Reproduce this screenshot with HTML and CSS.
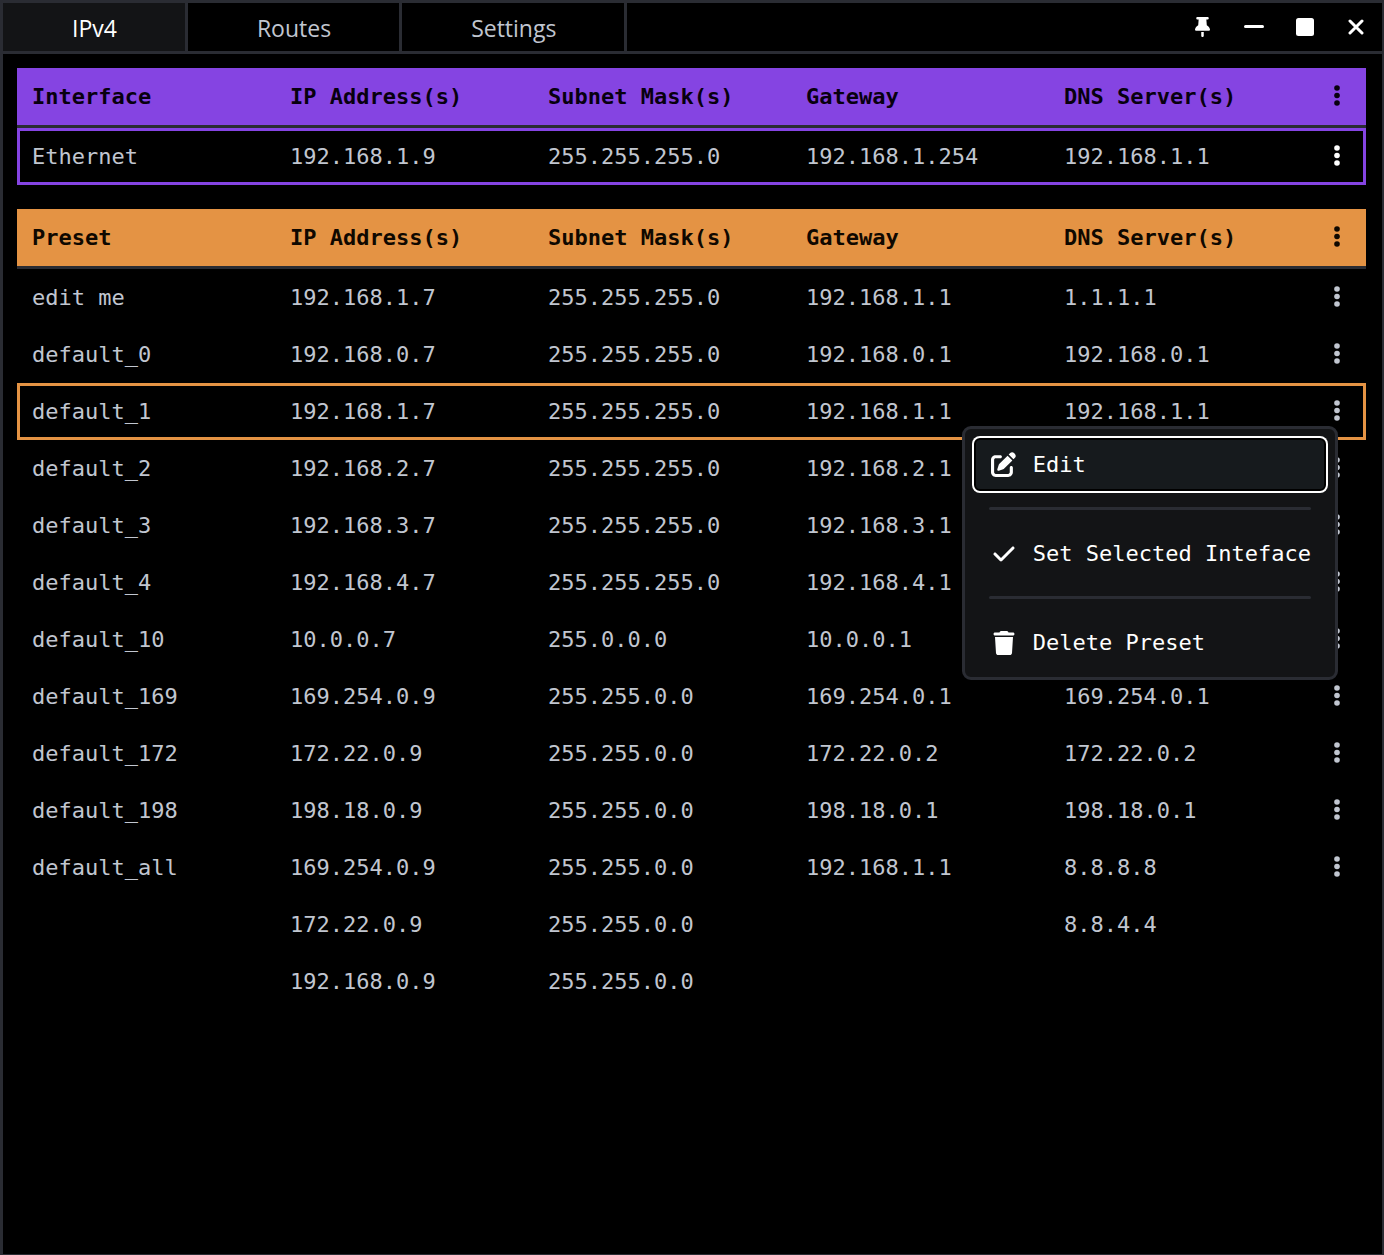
FILE: index.html
```html
<!DOCTYPE html>
<html lang="en">
<head>
<meta charset="utf-8">
<title>IPv4</title>
<link rel="stylesheet" href="styles.css">
</head>
<body>
<svg class="sprite" aria-hidden="true">
  <symbol id="dots" viewBox="0 0 6 21"><circle cx="3" cy="3" r="2.8"/><circle cx="3" cy="10.5" r="2.8"/><circle cx="3" cy="18" r="2.8"/></symbol>
  <symbol id="pin" viewBox="0 0 384 512"><path d="M32 32C32 14.3 46.3 0 64 0H320c17.7 0 32 14.3 32 32s-14.3 32-32 32H290.5l11.4 148.2c36.7 19.9 65.7 53.2 79.5 94.7l1 3c3.3 9.8 1.6 20.5-4.4 28.8s-15.7 13.3-26 13.3H32c-10.3 0-19.9-4.9-26-13.3s-7.7-19.1-4.4-28.8l1-3c13.8-41.5 42.8-74.8 79.5-94.7L93.5 64H64C46.3 64 32 49.7 32 32zM160 384h64v96c0 17.7-14.3 32-32 32s-32-14.3-32-32V384z"/></symbol>
  <symbol id="edit" viewBox="0 0 512 512"><path d="M471.6 21.7c-21.9-21.9-57.3-21.9-79.2 0L362.3 51.7l97.9 97.9 30.1-30.1c21.9-21.9 21.9-57.3 0-79.2L471.6 21.7zm-299.2 220c-6.1 6.1-10.8 13.6-13.5 21.9l-29.6 88.8c-2.9 8.6-.6 18.1 5.8 24.6s15.9 8.7 24.6 5.8l88.8-29.6c8.2-2.7 15.7-7.4 21.9-13.5L437.7 172.3 339.7 74.3 172.4 241.7zM96 64C43 64 0 107 0 160V416c0 53 43 96 96 96H352c53 0 96-43 96-96V320c0-17.7-14.3-32-32-32s-32 14.3-32 32v96c0 17.7-14.3 32-32 32H96c-17.7 0-32-14.3-32-32V160c0-17.7 14.3-32 32-32h96c17.7 0 32-14.3 32-32s-14.3-32-32-32H96z"/></symbol>
  <symbol id="check" viewBox="0 0 448 512"><path d="M438.6 105.4c12.5 12.5 12.5 32.8 0 45.3l-256 256c-12.5 12.5-32.8 12.5-45.3 0l-128-128c-12.5-12.5-12.5-32.8 0-45.3s32.8-12.5 45.3 0L160 338.7 393.4 105.4c12.5-12.5 32.8-12.5 45.3 0z"/></symbol>
  <symbol id="trash" viewBox="0 0 448 512"><path d="M135.2 17.7L128 32H32C14.3 32 0 46.3 0 64S14.3 96 32 96H416c17.7 0 32-14.3 32-32s-14.3-32-32-32H320l-7.2-14.3C307.4 6.8 296.3 0 284.2 0H163.8c-12.1 0-23.2 6.8-28.6 17.7zM416 128H32L53.2 467c1.6 25.3 22.6 45 47.9 45H346.9c25.3 0 46.3-19.7 47.9-45L416 128z"/></symbol>
</svg>
<div class="window">
  <header class="titlebar">
    <nav class="tabs">
      <button class="tab tab-active" type="button">IPv4</button>
      <button class="tab" type="button">Routes</button>
      <button class="tab" type="button">Settings</button>
    </nav>
    <div class="controls">
      <button class="control" type="button" aria-label="Pin"><svg width="15" height="20"><use href="#pin"/></svg></button>
      <button class="control" type="button" aria-label="Minimize"><svg width="20" height="20"><rect y="8" width="20" height="3" rx="1.5"/></svg></button>
      <button class="control" type="button" aria-label="Maximize"><svg width="18" height="18"><rect width="18" height="18" rx="2.5"/></svg></button>
      <button class="control" type="button" aria-label="Close"><svg width="16" height="16"><path class="stroke" d="M2 2L14 14M14 2L2 14"/></svg></button>
    </div>
  </header>
  <main class="content">
    <table class="grid interfaces">
      <thead>
        <tr><th scope="col">Interface</th><th scope="col">IP Address(s)</th><th scope="col">Subnet Mask(s)</th><th scope="col">Gateway</th><th scope="col">DNS Server(s)</th><td class="actions"><button class="more" type="button" aria-label="Interface options"><svg><use href="#dots"/></svg></button></td></tr>
      </thead>
      <tbody>
        <tr class="selected"><td>Ethernet</td><td>192.168.1.9</td><td>255.255.255.0</td><td>192.168.1.254</td><td>192.168.1.1</td><td class="actions"><button class="more more-bright" type="button" aria-label="Ethernet options"><svg><use href="#dots"/></svg></button></td></tr>
      </tbody>
    </table>
    <table class="grid presets">
      <thead>
        <tr><th scope="col">Preset</th><th scope="col">IP Address(s)</th><th scope="col">Subnet Mask(s)</th><th scope="col">Gateway</th><th scope="col">DNS Server(s)</th><td class="actions"><button class="more" type="button" aria-label="Preset options"><svg><use href="#dots"/></svg></button></td></tr>
      </thead>
      <tbody>
        <tr><td>edit me</td><td>192.168.1.7</td><td>255.255.255.0</td><td>192.168.1.1</td><td>1.1.1.1</td><td class="actions"><button class="more" type="button" aria-label="Options"><svg><use href="#dots"/></svg></button></td></tr>
        <tr><td>default_0</td><td>192.168.0.7</td><td>255.255.255.0</td><td>192.168.0.1</td><td>192.168.0.1</td><td class="actions"><button class="more" type="button" aria-label="Options"><svg><use href="#dots"/></svg></button></td></tr>
        <tr class="selected"><td>default_1</td><td>192.168.1.7</td><td>255.255.255.0</td><td>192.168.1.1</td><td>192.168.1.1</td><td class="actions"><button class="more" type="button" aria-label="Options"><svg><use href="#dots"/></svg></button>
          <div class="menu" role="menu">
            <button class="item item-focus" type="button" role="menuitem"><span class="icon"><svg width="25" height="25"><use href="#edit"/></svg></span>Edit</button>
            <hr class="divider">
            <button class="item" type="button" role="menuitem"><span class="icon"><svg width="22" height="24"><use href="#check"/></svg></span>Set Selected Inteface</button>
            <hr class="divider">
            <button class="item" type="button" role="menuitem"><span class="icon"><svg width="22" height="24"><use href="#trash"/></svg></span>Delete Preset</button>
          </div></td></tr>
        <tr><td>default_2</td><td>192.168.2.7</td><td>255.255.255.0</td><td>192.168.2.1</td><td></td><td class="actions"><button class="more" type="button" aria-label="Options"><svg><use href="#dots"/></svg></button></td></tr>
        <tr><td>default_3</td><td>192.168.3.7</td><td>255.255.255.0</td><td>192.168.3.1</td><td></td><td class="actions"><button class="more" type="button" aria-label="Options"><svg><use href="#dots"/></svg></button></td></tr>
        <tr><td>default_4</td><td>192.168.4.7</td><td>255.255.255.0</td><td>192.168.4.1</td><td></td><td class="actions"><button class="more" type="button" aria-label="Options"><svg><use href="#dots"/></svg></button></td></tr>
        <tr><td>default_10</td><td>10.0.0.7</td><td>255.0.0.0</td><td>10.0.0.1</td><td></td><td class="actions"><button class="more" type="button" aria-label="Options"><svg><use href="#dots"/></svg></button></td></tr>
        <tr><td>default_169</td><td>169.254.0.9</td><td>255.255.0.0</td><td>169.254.0.1</td><td>169.254.0.1</td><td class="actions"><button class="more" type="button" aria-label="Options"><svg><use href="#dots"/></svg></button></td></tr>
        <tr><td>default_172</td><td>172.22.0.9</td><td>255.255.0.0</td><td>172.22.0.2</td><td>172.22.0.2</td><td class="actions"><button class="more" type="button" aria-label="Options"><svg><use href="#dots"/></svg></button></td></tr>
        <tr><td>default_198</td><td>198.18.0.9</td><td>255.255.0.0</td><td>198.18.0.1</td><td>198.18.0.1</td><td class="actions"><button class="more" type="button" aria-label="Options"><svg><use href="#dots"/></svg></button></td></tr>
        <tr><td>default_all</td><td>169.254.0.9<br>172.22.0.9<br>192.168.0.9</td><td>255.255.0.0<br>255.255.0.0<br>255.255.0.0</td><td>192.168.1.1</td><td>8.8.8.8<br>8.8.4.4</td><td class="actions"><button class="more" type="button" aria-label="Options"><svg><use href="#dots"/></svg></button></td></tr>
      </tbody>
    </table>
  </main>
</div>
</body>
</html>
```
FILE: styles.css
```css
:root {
  --line: #2a2c33;
  --panel: #131416;
  --text: #c1c6d0;
  --mono: "DejaVu Sans Mono", "Liberation Mono", monospace;
}

* { box-sizing: border-box; }

body {
  margin: 0;
  background: #000;
  color: var(--text);
  font: 22px/57px var(--mono);
}

button {
  margin: 0;
  padding: 0;
  border: 0;
  background: none;
  color: inherit;
  font: inherit;
}

svg { display: block; fill: currentColor; }

.sprite { position: absolute; width: 0; height: 0; }

.window {
  min-height: 100vh;
  border: 3px solid var(--line);
  border-right-width: 2px;
  border-bottom-width: 1px;
}

/* Title bar */
.titlebar {
  display: flex;
  justify-content: space-between;
  height: 51px;
  padding-right: 1px;
  border-bottom: 3px solid var(--line);
}

.tabs, .controls { display: flex; }

.tab {
  padding: 2px 68px 0 69px;
  border-right: 3px solid var(--line);
  font: 23px/46px "Open Sans", "Noto Sans", sans-serif;
}

.tab-active { background: var(--panel); color: #fff; }

.control {
  display: grid;
  place-items: center;
  width: 51px;
  color: #fff;
}

.stroke {
  fill: none;
  stroke: currentColor;
  stroke-width: 3;
  stroke-linecap: round;
}

/* Tables */
.content {
  display: grid;
  gap: 24px;
  padding: 14px 16px 14px 14px;
}

.grid {
  width: 100%;
  table-layout: fixed;
  border-collapse: separate;
  border-spacing: 0;
}

.interfaces { --accent: #8544e2; --ink: #08000f; }
.presets { --accent: #e49344; --ink: #0f0800; }

.grid th, .grid td {
  height: 57px;
  padding: 0 0 0 15px;
  text-align: left;
  vertical-align: top;
}

.grid thead th, .grid thead td {
  height: 60px;
  border-bottom: 3px solid var(--line);
  background: var(--accent);
  background-clip: padding-box;
  color: var(--ink);
}

.grid .actions { position: relative; width: 59px; padding: 0; }

.selected { outline: 3px solid var(--accent); outline-offset: -3px; }

.more {
  display: grid;
  place-items: center;
  width: 100%;
  height: 55px;
}

.more svg { width: 6px; height: 21px; }

.more-bright { color: #fff; }

/* Row menu */
.menu {
  position: absolute;
  top: 43px;
  right: 28px;
  z-index: 1;
  padding: 7px 7px 6px;
  border: 3px solid var(--line);
  border-radius: 9px;
  background: var(--panel);
  color: #fff;
}

.item {
  display: flex;
  align-items: center;
  gap: 14px;
  width: 100%;
  padding: 0 17px;
  border-radius: 8px;
  white-space: nowrap;
}

.item-focus {
  background: #161a1d;
  box-shadow: inset 0 0 0 2px #fff, inset 0 0 0 4px #000;
}

.icon { display: grid; place-items: center; width: 30px; }

.divider {
  height: 3px;
  margin: 14px 17px 15px;
  border: 0;
  border-radius: 2px;
  background: var(--line);
}
```
